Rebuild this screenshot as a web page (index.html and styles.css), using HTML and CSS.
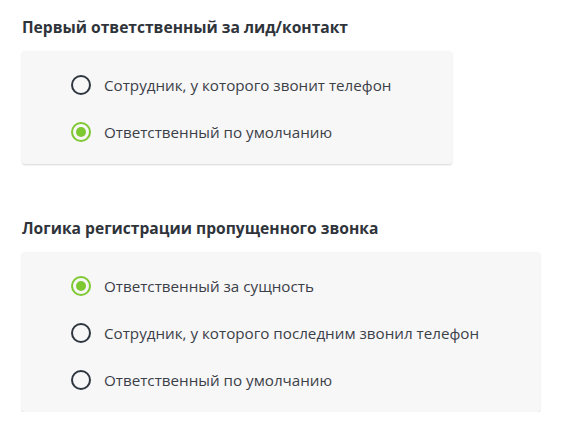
FILE: index.html
```html
<!DOCTYPE html>
<html lang="ru">
<head>
<meta charset="utf-8">
<link rel="stylesheet" href="styles.css">
</head>
<body>
<div class="page">
  <section class="group">
    <h2 class="title">Первый ответственный за лид/контакт</h2>
    <div class="card">
      <label class="option"><span class="radio"></span><span class="label">Сотрудник, у которого звонит телефон</span></label>
      <label class="option"><span class="radio checked"></span><span class="label">Ответственный по умолчанию</span></label>
    </div>
  </section>
  <section class="group">
    <h2 class="title">Логика регистрации пропущенного звонка</h2>
    <div class="card">
      <label class="option"><span class="radio checked"></span><span class="label">Ответственный за сущность</span></label>
      <label class="option"><span class="radio"></span><span class="label">Сотрудник, у которого последним звонил телефон</span></label>
      <label class="option"><span class="radio"></span><span class="label">Ответственный по умолчанию</span></label>
    </div>
  </section>
</div>
</body>
</html>
```

FILE: styles.css
```css
html, body {
  margin: 0;
  padding: 0;
  background: #ffffff;
}
body {
  font-family: "Open Sans", "Noto Sans", sans-serif;
  color: #3b4048;
}
.page {
  padding: 17px 22px 0 22px;
  display: flex;
  flex-direction: column;
  gap: 54px;
}
.group {
  display: flex;
  flex-direction: column;
  align-items: flex-start;
}
.title {
  margin: 0 0 14px 0;
  font-size: 15.6px;
  font-weight: 700;
  line-height: 20px;
  color: #2f343b;
}
.card {
  background: #f7f7f7;
  border-radius: 3px;
  box-shadow: 0 1px 2px rgba(0,0,0,0.16);
  padding: 23px 61px 21px 49px;
  display: flex;
  flex-direction: column;
  gap: 25px;
}
.option {
  display: flex;
  align-items: center;
  gap: 13px;
  height: 22px;
}
.radio {
  box-sizing: border-box;
  width: 20px;
  height: 20px;
  border: 2px solid #2f3640;
  border-radius: 50%;
  flex: none;
  position: relative;
}
.radio.checked {
  border-color: #7ec832;
}
.radio.checked::after {
  content: "";
  position: absolute;
  left: 3px;
  top: 3px;
  width: 10px;
  height: 10px;
  border-radius: 50%;
  background: #7ec832;
}
.label {
  font-size: 15.2px;
  line-height: 22px;
  color: #3b4048;
  white-space: nowrap;
}
```
